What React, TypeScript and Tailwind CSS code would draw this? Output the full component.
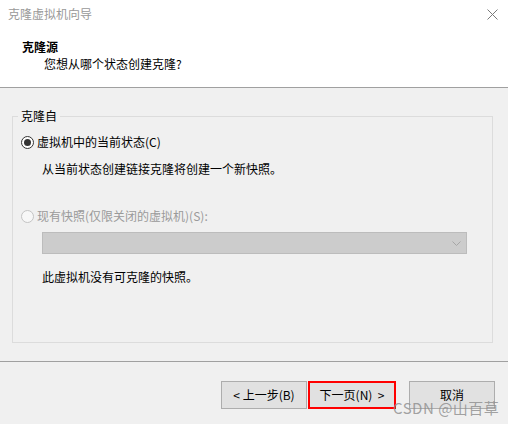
import React from 'react';

const Radio = ({ checked, disabled }: { checked?: boolean; disabled?: boolean }) => (
    <span
        className={`w-[13px] h-[13px] rounded-full border flex items-center justify-center shrink-0 ${
            disabled ? 'border-[#c4c4c4] bg-[#f7f7f7]' : 'border-[#333333] bg-white'
        }`}
    >
        {checked && <span className="w-[7px] h-[7px] rounded-full bg-[#333333]" />}
    </span>
);

const Button = ({ children, highlight }: { children: React.ReactNode; highlight?: boolean }) => (
    <button
        className={`h-[28px] flex items-center justify-center text-[12px] text-black bg-[#e1e1e1] ${
            highlight ? 'w-[88px] border-2 border-[#ff0000]' : 'w-[86px] border border-[#adadad]'
        }`}
    >
        {children}
    </button>
);

export default function App() {
    return (
        <div
            className="relative w-[508px] h-[424px] flex flex-col bg-[#f0f0f0] overflow-hidden text-[12px] leading-[16px] text-black"
            style={{ fontFamily: '"Noto Sans CJK SC", "Noto Sans", sans-serif' }}
        >
            {/* header */}
            <div className="h-[88px] bg-white border-b border-[#a0a0a0] flex flex-col">
                <div className="h-[28px] flex items-center justify-between pl-[8px] pr-[10px]">
                    <span className="text-[#999999]">克隆虚拟机向导</span>
                    <svg width="11" height="11" viewBox="0 0 11 11" className="text-[#7a7a7a]">
                        <path d="M0.5 0.5 L10.5 10.5 M10.5 0.5 L0.5 10.5" stroke="currentColor" strokeWidth="1" />
                    </svg>
                </div>
                <div className="pl-[22px] mt-[11px] font-bold">克隆源</div>
                <div className="pl-[44px] mt-[1px]">您想从哪个状态创建克隆?</div>
            </div>

            {/* body */}
            <div className="pl-[12px] pr-[15px] pt-[28px]">
                <div className="relative h-[227px] border border-[#dcdcdc] flex flex-col">
                    <span className="absolute -top-[9px] left-[5px] px-[3px] bg-[#f0f0f0]">克隆自</span>
                    <div className="flex items-center gap-[3px] ml-[8px] mt-[17px]">
                        <Radio checked />
                        <span>虚拟机中的当前状态(C)</span>
                    </div>
                    <div className="pl-[29px] mt-[11px]">从当前状态创建链接克隆将创建一个新快照。</div>
                    <div className="flex items-center gap-[3px] ml-[8px] mt-[31px] text-[#9a9a9a]">
                        <Radio disabled />
                        <span>现有快照(仅限关闭的虚拟机)(S):</span>
                    </div>
                    <div className="ml-[29px] mt-[8px] w-[425px] h-[22px] bg-[#cccccc] border border-[#bcbcbc] flex items-center justify-end pr-[5px]">
                        <svg width="9" height="5" viewBox="0 0 9 5">
                            <path d="M0.5 0.5 L4.5 4.5 L8.5 0.5" fill="none" stroke="#a6a6a6" strokeWidth="1" />
                        </svg>
                    </div>
                    <div className="pl-[29px] mt-[15px]">此虚拟机没有可克隆的快照。</div>
                </div>
            </div>

            {/* footer */}
            <div className="mt-[18px] border-t border-[#a0a0a0]" />
            <div className="flex justify-end items-center pr-[13px] pt-[19px]">
                <Button>&lt; 上一步(B)</Button>
                <div className="ml-[1px]">
                    <Button highlight>下一页(N) &nbsp;&gt;</Button>
                </div>
                <div className="ml-[13px]">
                    <Button>取消</Button>
                </div>
            </div>

            <span className="absolute left-[393px] top-[399px] text-[15px] leading-[18px] text-[#8c8c8c]/80 tracking-[0.5px]">
                CSDN @山百草
            </span>
        </div>
    );
}
